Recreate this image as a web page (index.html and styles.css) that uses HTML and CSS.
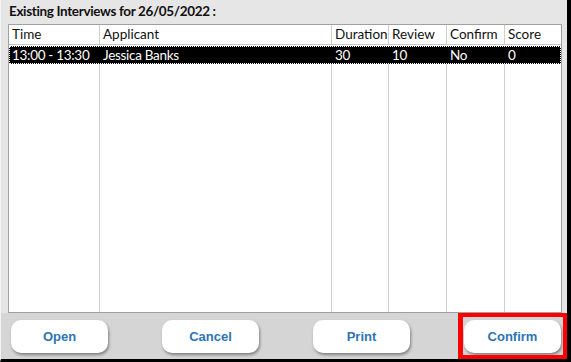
FILE: index.html
```html
<!DOCTYPE html>
<html>
<head>
<meta charset="utf-8">
<link rel="stylesheet" href="styles.css">
</head>
<body>
<div class="window">
  <div class="top">
    <div class="title">Existing Interviews for 26/05/2022 :</div>
    <div class="grid">
      <div class="row head">
        <div class="c c1">Time</div>
        <div class="c c2">Applicant</div>
        <div class="c c3">Duration</div>
        <div class="c c4">Review</div>
        <div class="c c5">Confirm</div>
        <div class="c c6">Score</div>
      </div>
      <div class="row sel">
        <div class="c c1">13:00 - 13:30</div>
        <div class="c c2">Jessica Banks</div>
        <div class="c c3">30</div>
        <div class="c c4">10</div>
        <div class="c c5">No</div>
        <div class="c c6">0</div>
      </div>
      <div class="row fill">
        <div class="c c1"></div>
        <div class="c c2"></div>
        <div class="c c3"></div>
        <div class="c c4"></div>
        <div class="c c5"></div>
        <div class="c c6"></div>
      </div>
    </div>
  </div>
  <div class="bar">
    <button class="btn">Open</button>
    <button class="btn">Cancel</button>
    <button class="btn">Print</button>
    <button class="btn">Confirm</button>
    <div class="highlight"></div>
  </div>
</div>
</body>
</html>
```
FILE: styles.css
```css
html, body {
  margin: 0;
  padding: 0;
  background: #000;
}
.window {
  width: 571px;
  height: 362px;
  box-sizing: border-box;
  border-right: 4px solid #000;
  border-bottom: 3px solid #000;
  border-left: 1px solid #f4f4f4;
  display: flex;
  flex-direction: column;
  background: #e6e6e6;
  overflow: hidden;
}
.top {
  height: 313px;
  display: flex;
  flex-direction: column;
  padding-left: 7px;
  box-sizing: border-box;
}
.title {
  height: 24px;
  box-sizing: border-box;
  padding: 3px 0 0 1px;
  font-family: Lato, "Liberation Sans", sans-serif;
  font-weight: bold;
  font-size: 13.5px;
  letter-spacing: -0.35px;
  color: #111;
  line-height: 16px;
}
.grid {
  width: 554px;
  height: 289px;
  box-sizing: border-box;
  border: 1px solid #a0a0a0;
  background: #fff;
  display: flex;
  flex-direction: column;
  font-family: Lato, "Liberation Sans", sans-serif;
  font-size: 13.5px;
  color: #111;
}
.row {
  display: flex;
}
.c {
  box-sizing: border-box;
  border-right: 1px solid #cfcfcf;
  padding-left: 3px;
  white-space: nowrap;
  overflow: hidden;
}
.c1 { width: 91px; }
.c2 { width: 232px; }
.c3 { width: 57px; }
.c4 { width: 58px; }
.c5 { width: 58px; }
.c6 { width: 56px; border-right: none; }
.head {
  height: 19px;
  border-bottom: 1px solid #c4c4c4;
}
.head .c {
  line-height: 18px;
}
.sel {
  height: 18px;
  margin-top: 1px;
  background: #000;
  color: #fff;
  outline: 1px dotted #fff;
  outline-offset: -1px;
  letter-spacing: -0.3px;
}
.sel .c {
  border-right-color: #000;
  line-height: 18px;
}
.fill {
  flex: 1;
}
.bar {
  position: relative;
  flex: 1;
  background: #d5d5d5;
  display: flex;
  align-items: flex-start;
  gap: 54px;
  padding: 7px 0 0 10px;
  box-sizing: border-box;
}
.btn {
  width: 97px;
  height: 33px;
  border: none;
  border-radius: 10px;
  background: #fff;
  box-shadow: 1px 2px 3px rgba(0, 0, 0, 0.4);
  font-family: "Liberation Sans", Arial, sans-serif;
  font-weight: bold;
  font-size: 13px;
  color: #2e74b5;
  padding: 0;
}
.highlight {
  position: absolute;
  left: 457px;
  top: 0;
  width: 109px;
  height: 46px;
  box-sizing: border-box;
  border: 4px solid #ff0000;
  border-left-width: 5px;
}
```
